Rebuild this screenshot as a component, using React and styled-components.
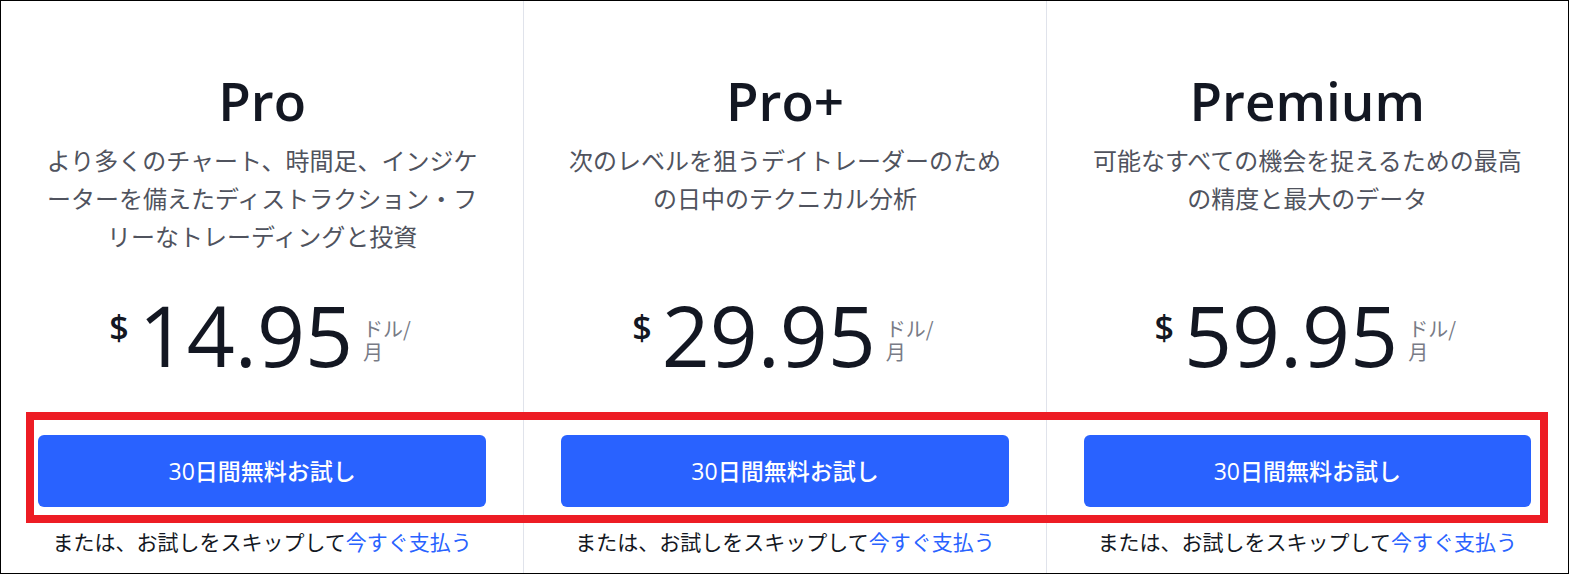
import styled, { createGlobalStyle } from 'styled-components'

const GlobalStyle = createGlobalStyle`
  html, body {
    margin: 0;
    padding: 0;
    background: #fff;
  }
  body {
    font-family: "Open Sans", "Noto Sans CJK JP", sans-serif;
    color: #131722;
  }
`

const Frame = styled.div`
  position: relative;
  width: 1569px;
  height: 574px;
  box-sizing: border-box;
  border: 1px solid #000;
  display: grid;
  grid-template-columns: repeat(3, 1fr);
  overflow: hidden;
`

const Column = styled.div`
  display: flex;
  flex-direction: column;
  align-items: center;
  text-align: center;
  padding: 68px 37px 0;
  border-left: ${p => (p.first ? 'none' : '1px solid #e0e3eb')};
  min-width: 0;
`

const Title = styled.h2`
  margin: 0;
  font-size: 53px;
  line-height: 64px;
  font-weight: 600;
  color: #131722;
`

const Description = styled.p`
  margin: 8px 0 0;
  height: 114px;
  font-size: 24px;
  line-height: 38px;
  color: #50535e;
  font-family: "Noto Sans CJK JP", sans-serif;
`

const PriceRow = styled.div`
  margin-top: 38px;
  display: flex;
  align-items: flex-start;
  justify-content: center;
`

const Currency = styled.span`
  font-size: 34px;
  font-weight: 600;
  line-height: 1;
  margin-top: 17px;
  margin-right: 10px;
`

const Amount = styled.span`
  font-size: 84px;
  line-height: 84px;
  font-weight: 400;
`

const Unit = styled.span`
  width: 52px;
  margin-left: 10px;
  margin-top: 24px;
  font-family: "Noto Sans CJK JP", sans-serif;
  font-size: 20px;
  line-height: 23px;
  color: #787b86;
  text-align: left;
  word-break: break-all;
`

const TrialButton = styled.button`
  margin-top: 58px;
  width: 100%;
  height: 72px;
  border: none;
  border-radius: 6px;
  background: #2962ff;
  color: #fff;
  font-family: "Open Sans", "Noto Sans CJK JP", sans-serif;
  font-size: 23px;
  font-weight: 500;
  padding: 0 0 3px;
  cursor: pointer;
`

const SkipLine = styled.p`
  margin: 19px 0 0;
  font-family: "Noto Sans CJK JP", sans-serif;
  font-size: 21px;
  line-height: 30px;
  color: #131722;
  white-space: nowrap;
`

const PayLink = styled.a`
  color: #2962ff;
  text-decoration: none;
`

const Highlight = styled.div`
  position: absolute;
  left: 25px;
  top: 411px;
  width: 1522px;
  height: 111px;
  box-sizing: border-box;
  border: 8px solid #ed1c24;
  pointer-events: none;
`

const plans = [
  {
    name: 'Pro',
    text: 'より多くのチャート、時間足、インジケーターを備えたディストラクション・フリーなトレーディングと投資',
    price: '14.95',
  },
  {
    name: 'Pro+',
    text: '次のレベルを狙うデイトレーダーのための日中のテクニカル分析',
    price: '29.95',
  },
  {
    name: 'Premium',
    text: '可能なすべての機会を捉えるための最高の精度と最大のデータ',
    price: '59.95',
  },
]

export default function App() {
  return (
    <>
      <GlobalStyle />
      <Frame>
        {plans.map((plan, i) => (
          <Column key={plan.name} first={i === 0}>
            <Title>{plan.name}</Title>
            <Description>{plan.text}</Description>
            <PriceRow>
              <Currency>$</Currency>
              <Amount>{plan.price}</Amount>
              <Unit>ドル/月</Unit>
            </PriceRow>
            <TrialButton>30日間無料お試し</TrialButton>
            <SkipLine>
              または、お試しをスキップして<PayLink href="#">今すぐ支払う</PayLink>
            </SkipLine>
          </Column>
        ))}
        <Highlight />
      </Frame>
    </>
  )
}
